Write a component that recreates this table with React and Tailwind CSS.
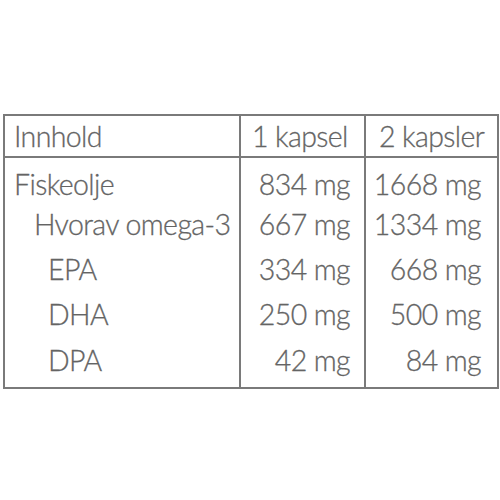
const rows = [
  { name: "Fiskeolje", indent: "pl-[9px]", one: "834 mg", two: "1668 mg" },
  { name: "Hvorav omega-3", indent: "pl-[29px]", one: "667 mg", two: "1334 mg" },
  { name: "EPA", indent: "pl-[43px]", one: "334 mg", two: "668 mg" },
  { name: "DHA", indent: "pl-[43px]", one: "250 mg", two: "500 mg" },
  { name: "DPA", indent: "pl-[43px]", one: "42 mg", two: "84 mg" },
];

export default function App() {
  return (
    <div
      className="w-[500px] h-[500px] bg-white pt-[114px] pl-[3px] text-[#646464]"
      style={{ fontFamily: "Lato, 'Open Sans', sans-serif" }}
    >
      <table className="border-collapse w-[496px] text-[28.5px] font-light leading-none tracking-[-0.6px] [-webkit-text-stroke:0.3px_#646464]">
        <thead>
          <tr className="h-[42px]">
            <th className="border-2 border-[#7a7a7a] w-[236px] text-left font-light pl-[9px]">Innhold</th>
            <th className="border-2 border-[#7a7a7a] w-[125px] text-left font-light pl-[11px]">1 kapsel</th>
            <th className="border-2 border-[#7a7a7a] text-left font-light pl-[13px]">2 kapsler</th>
          </tr>
        </thead>
        <tbody>
          {rows.map((r, i) => {
            const last = i === rows.length - 1;
            const edge = `${last ? "border-b-2 pb-[4px]" : ""} ${i === 0 ? "pt-[8px]" : ""}`;
            return (
              <tr key={r.name} className={last ? "h-[51px]" : "h-[45px]"}>
                <td className={`border-x-2 border-[#7a7a7a] ${edge} ${r.indent}`}>{r.name}</td>
                <td className={`border-x-2 border-[#7a7a7a] text-right pr-[14px] ${edge}`}>{r.one}</td>
                <td className={`border-x-2 border-[#7a7a7a] text-right pr-[16px] ${edge}`}>{r.two}</td>
              </tr>
            );
          })}
        </tbody>
      </table>
    </div>
  );
}
